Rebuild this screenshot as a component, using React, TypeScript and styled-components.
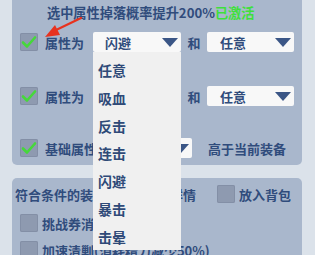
import React from 'react';
import styled, { createGlobalStyle } from 'styled-components';

const GlobalStyle = createGlobalStyle`
  html, body {
    margin: 0;
    padding: 0;
    background: #dbe2ea;
  }
  body {
    font-family: "Noto Sans CJK SC", "Noto Sans", sans-serif;
    color: #304c7c;
  }
`;

const Screen = styled.div`
  position: relative;
  width: 315px;
  height: 255px;
  overflow: hidden;
  padding: 0 13px 0 12px;
  box-sizing: border-box;
`;

const Panel = styled.div<{ $top?: number }>`
  background: #a9b7cc;
  border-radius: ${p => (p.$top ? '5px 5px 0 0' : '0 0 5px 5px')};
  margin-top: ${p => p.$top ?? 0}px;
  display: flex;
  flex-direction: column;
  box-sizing: border-box;
`;

const TopPanel = styled(Panel)`
  height: 165px;
  padding: 0 9px 0 8px;
`;

const BottomPanel = styled(Panel)`
  height: 90px;
  padding: 6px 8px 0 3px;
`;

const Title = styled.div`
  height: 26px;
  line-height: 26px;
  padding-left: 27px;
  font-size: 13.2px;
  font-weight: 700;
  white-space: nowrap;
`;

const Active = styled.span`
  color: #3fe03c;
`;

const Row = styled.div<{ $gap: number; $indent?: number }>`
  display: flex;
  align-items: center;
  height: 20px;
  margin-top: ${p => p.$gap}px;
  padding-left: ${p => p.$indent ?? 0}px;
  white-space: nowrap;
`;

const Box = styled.div<{ $ml?: number }>`
  width: 18px;
  height: 18px;
  margin-left: ${p => p.$ml ?? 0}px;
  border-radius: 2px;
  background: #8e9ab0;
  box-shadow: inset 0 0 0 1px #838fa6;
  flex: none;
  display: flex;
  align-items: center;
  justify-content: center;
`;

const Label = styled.span<{ $w?: number; $ml?: number }>`
  font-size: 13px;
  font-weight: 700;
  margin-left: ${p => p.$ml ?? 7}px;
  width: ${p => (p.$w ? `${p.$w}px` : 'auto')};
  overflow: hidden;
  flex: none;
`;

const And = styled.span`
  width: 26px;
  text-align: center;
  font-size: 13px;
  font-weight: 700;
  flex: none;
`;

const Select = styled.div<{ $w: number; $pad?: number }>`
  width: ${p => p.$w}px;
  height: 20px;
  background: #f8f8f8;
  border-radius: 2px;
  display: flex;
  align-items: center;
  justify-content: space-between;
  padding: 0 3px 0 ${p => p.$pad ?? 12}px;
  box-sizing: border-box;
  font-size: 13px;
  font-weight: 700;
  flex: none;
`;

const Arrow = styled.span`
  width: 0;
  height: 0;
  border-left: 8px solid transparent;
  border-right: 8px solid transparent;
  border-top: 9px solid #3b5686;
`;

const DropList = styled.div`
  position: absolute;
  left: 93px;
  top: 52px;
  width: 88px;
  height: 198px;
  overflow: hidden;
  background: #f0f0f0;
  padding-top: 5px;
  box-sizing: border-box;
`;

const Option = styled.div`
  height: 27.8px;
  line-height: 27.8px;
  padding-left: 5px;
  font-size: 14px;
  font-weight: 700;
  color: #2f4a78;
`;

const Pointer = styled.svg`
  position: absolute;
  left: 40px;
  top: 14px;
`;

const Check = () => (
  <svg width="16" height="14" viewBox="0 0 16 14">
    <path d="M2 7.5 L6 11.5 L14 2.5" fill="none" stroke="#46d83a" strokeWidth="2.6" strokeLinecap="round" strokeLinejoin="round" />
  </svg>
);

const options = ['任意', '吸血', '反击', '连击', '闪避', '暴击', '击晕'];

export default function App() {
  return (
    <>
      <GlobalStyle />
      <Screen>
        <TopPanel>
          <Title>
            选中属性掉落概率提升200%<Active>已激活</Active>
          </Title>
          <Row $gap={6}>
            <Box><Check /></Box>
            <Label $w={48}>属性为</Label>
            <Select $w={88}>闪避<Arrow /></Select>
            <And>和</And>
            <Select $w={87} $pad={13}>任意<Arrow /></Select>
          </Row>
          <Row $gap={34}>
            <Box><Check /></Box>
            <Label $w={48}>属性为</Label>
            <Select $w={88}>任意<Arrow /></Select>
            <And>和</And>
            <Select $w={87} $pad={13}>任意<Arrow /></Select>
          </Row>
          <Row $gap={32}>
            <Box><Check /></Box>
            <Label $w={60}>基础属性</Label>
            <Select $w={87}>全部<Arrow /></Select>
            <Label $ml={16}>高于当前装备</Label>
          </Row>
        </TopPanel>
        <BottomPanel $top={13}>
          <Row $gap={0}>
            <Label $ml={0}>符合条件的装备</Label>
            <Box $ml={12} />
            <Label $ml={8}>显示详情</Label>
            <Box $ml={21} />
            <Label $ml={4}>放入背包</Label>
          </Row>
          <Row $gap={9} $indent={5}>
            <Box />
            <Label $ml={4}>挑战券消耗提升</Label>
          </Row>
          <Row $gap={7} $indent={5}>
            <Box />
            <Label $ml={4}>加速清剿(消耗精力减少50%)</Label>
          </Row>
        </BottomPanel>
        <Pointer width="46" height="28" viewBox="0 0 46 28">
          <path d="M41 4 L14 17" stroke="#e8321e" strokeWidth="2.2" strokeLinecap="round" />
          <path d="M5 23 L15 11 L20 21 Z" fill="#e8321e" />
        </Pointer>
        <DropList>
          {options.map(o => (
            <Option key={o}>{o}</Option>
          ))}
        </DropList>
      </Screen>
    </>
  );
}
